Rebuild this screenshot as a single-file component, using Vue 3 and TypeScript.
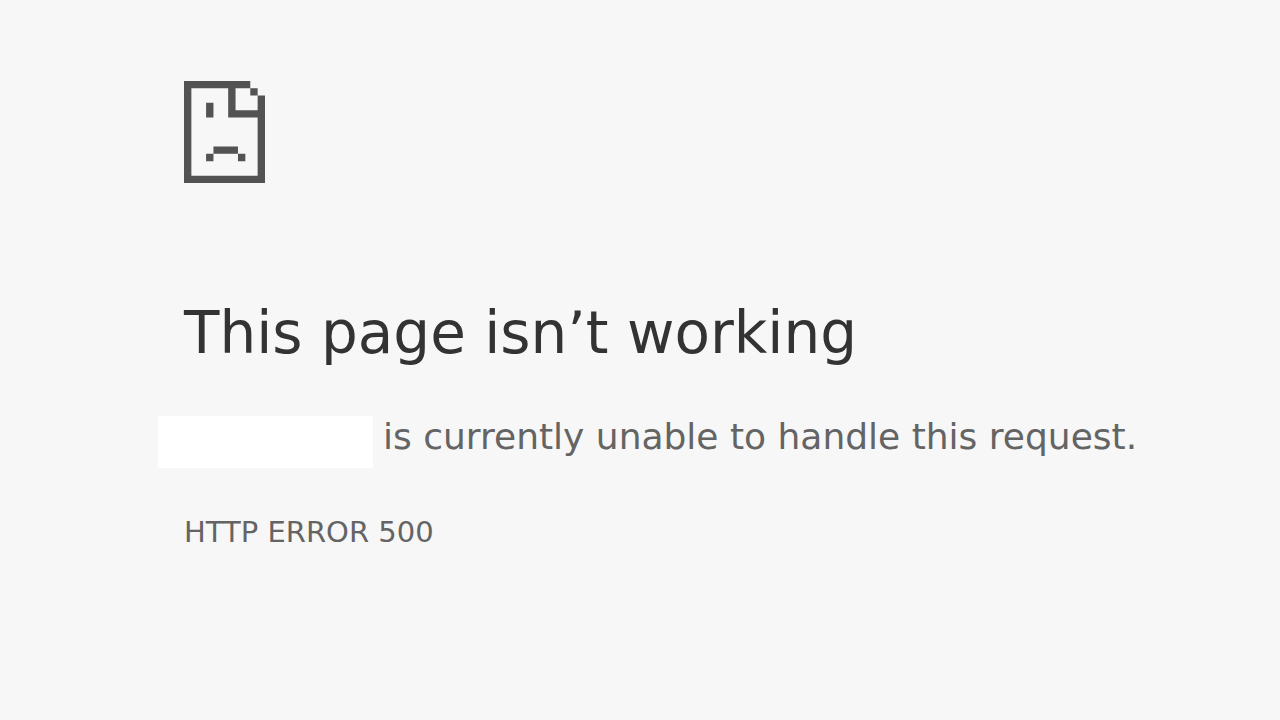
<script setup lang="ts">
const title: string = 'This page isn’t working'
const message: string = 'is currently unable to handle this request.'
const errorCode: string = 'HTTP ERROR 500'
</script>

<template>
  <main class="page">
    <svg class="icon" viewBox="0 0 11 14" preserveAspectRatio="none" aria-hidden="true">
      <path d="M0 0H9V1H7V4H10V2H11V14H0ZM1 1V13H10V5H6V1Z" fill-rule="evenodd" />
      <path d="M9 1H10V2H9ZM3 3H4V5H3ZM4 9H7.33V10H4ZM3 10H4V11H3ZM7.33 10H8.33V11H7.33Z" />
    </svg>
    <h1 class="title">{{ title }}</h1>
    <p class="message"><span class="host"></span><span>{{ message }}</span></p>
    <p class="code">{{ errorCode }}</p>
  </main>
</template>

<style>
body {
  margin: 0;
  background: #f7f7f7;
}
</style>

<style scoped>
.page {
  box-sizing: border-box;
  min-height: 100vh;
  padding: 81px 100px 40px 184px;
  background: #f7f7f7;
  color: #646464;
  font-family: "DejaVu Sans", sans-serif;
}
.icon {
  display: block;
  width: 81px;
  height: 102px;
  fill: #535353;
}
.title {
  margin: 114px 0 0;
  font-size: 58px;
  line-height: 72px;
  font-weight: 400;
  color: #333;
}
.message {
  display: flex;
  align-items: flex-start;
  gap: 10px;
  margin: 47px 0 0 -26px;
  font-size: 36px;
  line-height: 42px;
  white-space: nowrap;
}
.host {
  width: 215px;
  height: 52px;
  background: #fff;
}
.code {
  margin: 46px 0 0;
  font-size: 29px;
  line-height: 36px;
}
</style>
